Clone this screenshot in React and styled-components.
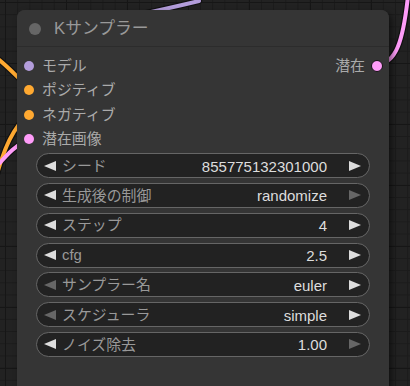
import React from "react";
import styled, { createGlobalStyle } from "styled-components";

const GlobalStyle = createGlobalStyle`
  html, body {
    margin: 0;
    padding: 0;
    background: #222;
  }
  * {
    box-sizing: border-box;
  }
`;

const FONT = `"Liberation Sans", "Noto Sans CJK JP", sans-serif`;

const inputs = [
  { label: "モデル", color: "#b39ddb", output: { label: "潜在", color: "#ff9cf9" } },
  { label: "ポジティブ", color: "#ffa931" },
  { label: "ネガティブ", color: "#ffa931" },
  { label: "潜在画像", color: "#ff9cf9" },
];

const widgets = [
  { label: "シード", value: "855775132301000", left: true, right: true },
  { label: "生成後の制御", value: "randomize", left: true, right: false },
  { label: "ステップ", value: "4", left: true, right: true },
  { label: "cfg", value: "2.5", left: true, right: true },
  { label: "サンプラー名", value: "euler", left: false, right: true },
  { label: "スケジューラ", value: "simple", left: false, right: true },
  { label: "ノイズ除去", value: "1.00", left: true, right: false },
];

// 背景のワイヤー (ノードの後ろ)
const wires = [
  { d: "M128,17 Q170,8 199,1", color: "#b39ddb" },
  { d: "M-6,56 C6,64 14,74 30,89", color: "#ffa931" },
  { d: "M-3,174 C4,150 12,128 30,113", color: "#ffa931" },
  { d: "M-3,166 C6,156 14,146 30,138", color: "#ff9cf9" },
  { d: "M377,65 C396,63 403,42 408,-4", color: "#ff9cf9" },
];

const App = () => {
  return (
    <>
      <GlobalStyle />
      <Canvas>
        <WireLayer width="410" height="386" viewBox="0 0 410 386">
          {wires.map((w, i) => (
            <path key={"o" + i} d={w.d} stroke="#111" strokeWidth="6.4" fill="none" strokeLinecap="round" />
          ))}
          {wires.map((w, i) => (
            <path key={"c" + i} d={w.d} stroke={w.color} strokeWidth="4" fill="none" strokeLinecap="round" />
          ))}
        </WireLayer>
        <Node>
          <Title>
            <TitleDot />
            <TitleText>Kサンプラー</TitleText>
          </Title>
          <Body>
            <Slots>
              {inputs.map((s) => (
                <SlotRow key={s.label}>
                  <SlotDot $color={s.color} />
                  <SlotLabel>{s.label}</SlotLabel>
                  {s.output && (
                    <OutputSlot>
                      <SlotLabel>{s.output.label}</SlotLabel>
                      <SlotDot $color={s.output.color} $outlined />
                    </OutputSlot>
                  )}
                </SlotRow>
              ))}
            </Slots>
            <Widgets>
              {widgets.map((w) => (
                <Widget key={w.label}>
                  <Arrow $dir="left" $active={w.left} />
                  <WidgetLabel>{w.label}</WidgetLabel>
                  <WidgetValue>{w.value}</WidgetValue>
                  <Arrow $dir="right" $active={w.right} />
                </Widget>
              ))}
            </Widgets>
          </Body>
        </Node>
      </Canvas>
    </>
  );
};

export default App;

const Canvas = styled.div`
  position: relative;
  width: 410px;
  height: 386px;
  overflow: hidden;
  background-color: #222;
  background-image:
    linear-gradient(#161616 1px, transparent 1px),
    linear-gradient(90deg, #161616 1px, transparent 1px),
    linear-gradient(#1b1b1b 1px, transparent 1px),
    linear-gradient(90deg, #1b1b1b 1px, transparent 1px);
  background-size: 61px 61px, 61px 61px, 12.2px 12.2px, 12.2px 12.2px;
  background-position: 5px 2px, 5px 2px, 5px 2px, 5px 2px;
`;

const WireLayer = styled.svg`
  position: absolute;
  left: 0;
  top: 0;
`;

const Node = styled.div`
  position: absolute;
  left: 17px;
  top: 10px;
  width: 372px;
  height: 420px;
  background: #353535;
  border-radius: 8px;
  box-shadow: 3px 3px 6px rgba(0, 0, 0, 0.5);
  font-family: ${FONT};
`;

const Title = styled.div`
  display: flex;
  align-items: center;
  height: 37px;
  padding-left: 12px;
  background: #353535;
  border-radius: 8px 8px 0 0;
  border-bottom: 1px solid #2c2c2c;
`;

const TitleDot = styled.div`
  width: 12px;
  height: 12px;
  border-radius: 50%;
  background: #666;
  margin: 1px 13px 0 0;
`;

const TitleText = styled.div`
  color: #999;
  font-size: 16.8px;
  line-height: 1;
  margin-top: 3px;
`;

const Body = styled.div`
  display: flex;
  flex-direction: column;
  padding-top: 7px;
`;

const Slots = styled.div`
  display: flex;
  flex-direction: column;
`;

const SlotRow = styled.div`
  display: flex;
  align-items: center;
  height: 24.3px;
  padding: 0 7px;
`;

const SlotDot = styled.div`
  width: ${(p) => (p.$outlined ? "12px" : "10px")};
  height: ${(p) => (p.$outlined ? "12px" : "10px")};
  border-radius: 50%;
  background: ${(p) => p.$color};
  border: ${(p) => (p.$outlined ? "1.5px solid #111" : "none")};
  margin-right: ${(p) => (p.$outlined ? "0" : "8px")};
  margin-left: ${(p) => (p.$outlined ? "6px" : "0")};
  flex-shrink: 0;
`;

const SlotLabel = styled.div`
  color: #aaa;
  font-size: 14.9px;
  line-height: 1;
  margin-top: 1px;
`;

const OutputSlot = styled.div`
  display: flex;
  align-items: center;
  margin-left: auto;
  margin-right: -1px;
`;

const Widgets = styled.div`
  display: flex;
  flex-direction: column;
  gap: 4.8px;
  padding: 2px 19px 0;
`;

const Widget = styled.div`
  display: flex;
  align-items: center;
  height: 25px;
  padding: 0 8px 0 7px;
  background: #222;
  border: 1px solid #666;
  border-radius: 13px;
`;

const Arrow = styled.div`
  width: 0;
  height: 0;
  border-top: 5.5px solid transparent;
  border-bottom: 5.5px solid transparent;
  ${(p) =>
    p.$dir === "left"
      ? `border-right: 12px solid ${p.$active ? "#ddd" : "#666"}; margin-right: 6px;`
      : `border-left: 12px solid ${p.$active ? "#ddd" : "#666"}; margin-left: 22px;`}
  flex-shrink: 0;
`;

const WidgetLabel = styled.div`
  color: #999;
  font-size: 14.9px;
  line-height: 1;
  margin-top: 1px;
`;

const WidgetValue = styled.div`
  margin-left: auto;
  color: #ddd;
  font-size: 15px;
  line-height: 1;
  margin-top: 1px;
`;
